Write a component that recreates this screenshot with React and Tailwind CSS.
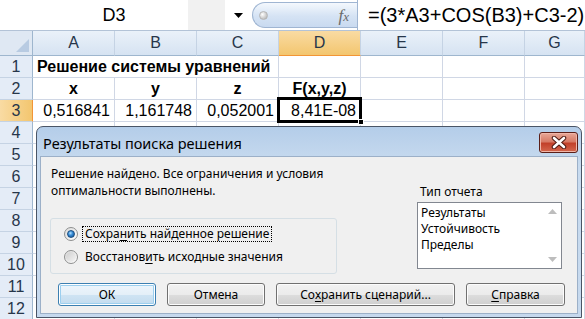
import React from "react";

const cellFont = "font-['Liberation_Sans',Arial,sans-serif]";

function HeaderCell({ label, sel, last }) {
  return (
    <div
      className={`${last ? "w-[60px]" : "w-[82px]"} shrink-0 h-full border-r border-b border-r-[#c5d3e4] border-b-[#9eb6ce] flex items-center justify-center text-[16px] text-[#27364a] ${
        sel
          ? "bg-[linear-gradient(#f9dba3,#f3c66f)] border-b-[#f29536]"
          : "bg-[linear-gradient(#eaf1f9,#d6e3f2)]"
      }`}
    >
      {label}
    </div>
  );
}

function RowHead({ n, sel }) {
  return (
    <div
      className={`w-[33px] shrink-0 h-full border-r border-b border-b-[#c5d3e4] flex items-center justify-center text-[16px] text-[#27364a] ${
        sel
          ? "bg-[linear-gradient(90deg,#f9dba3,#f3c66f)] border-r-[#f29536]"
          : "bg-[#e4ecf7] border-r-[#9eb6ce]"
      }`}
    >
      {n}
    </div>
  );
}

function Cell({ children, w = "w-[82px]", align = "justify-end", bold }) {
  return (
    <div
      className={`${w} shrink-0 h-full border-r border-b border-[#d0d7e5] flex items-center ${align} px-[4px] whitespace-nowrap text-[16px] text-black ${
        bold ? "font-bold" : ""
      }`}
    >
      {children}
    </div>
  );
}

function EmptyCells({ from }) {
  const ws = ["w-[82px]", "w-[82px]", "w-[82px]", "w-[82px]", "w-[82px]", "w-[82px]", "w-[60px]"];
  return ws.slice(from).map((w, i) => <Cell key={i} w={w} />);
}

function Btn({ children, w, def }) {
  return (
    <div
      className={`${w} h-[23px] rounded-[3px] border flex items-center justify-center text-[12px] text-black ${
        def
          ? "border-[#3c7fb1] shadow-[inset_0_0_0_1px_#fff,inset_0_0_0_2px_#9ccfef] bg-[linear-gradient(#eef6fc_0%,#e4eff8_50%,#cfe4f3_51%,#c3dbee_100%)]"
          : "border-[#707070] shadow-[inset_0_0_0_1px_#fcfcfc] bg-[linear-gradient(#f2f2f2_0%,#ebebeb_50%,#dddddd_51%,#cfcfcf_100%)]"
      }`}
    >
      {children}
    </div>
  );
}

function Radio({ checked }) {
  return (
    <div className="w-[14px] h-[14px] rounded-full border border-[#8e8f8f] bg-[linear-gradient(135deg,#dcdcdc,#ffffff)] flex items-center justify-center shrink-0">
      {checked ? (
        <div className="w-[8px] h-[8px] rounded-full bg-[radial-gradient(circle_at_40%_35%,#b6e2ff_0%,#3a8ed8_40%,#0c4a8a_100%)] border border-[#1c4e80]" />
      ) : (
        <div className="w-[10px] h-[10px] rounded-full bg-[linear-gradient(135deg,#cfcfcf,#f4f4f4)]" />
      )}
    </div>
  );
}

export default function App() {
  return (
    <div className={`relative w-[585px] h-[319px] overflow-hidden bg-white ${cellFont}`}>
      {/* Formula bar */}
      <div className="h-[31px] flex border-b border-[#b3c3d7] bg-white">
        <div className="w-[188px] shrink-0 flex items-center justify-center text-[18px] text-black pl-[40px]">
          D3
        </div>
        <div className="w-[37px] shrink-0 bg-[#f1f1f1]" />
        <div className="w-[27px] shrink-0 flex items-center justify-center">
          <svg width="9" height="5" viewBox="0 0 9 5">
            <path d="M0 0h9L4.5 5z" fill="#000" />
          </svg>
        </div>
        <div className="w-[105px] shrink-0 my-[2px] rounded-l-full border border-r-0 border-[#9fb5d2] bg-[linear-gradient(#f4f8fd,#d5e3f4_55%,#c9daf0)] flex items-center justify-between pl-[6px] pr-[8px]">
          <div className="w-[9px] h-[9px] rounded-full bg-[radial-gradient(circle_at_35%_35%,#ffffff,#a8a8a8)] border border-[#b5b5b5]" />
          <span className="font-['Liberation_Serif',serif] italic text-[17px] text-[#6b6b6b] leading-none">
            f<span className="text-[13px]">x</span>
          </span>
        </div>
        <div className="flex-1 border-l border-[#9fb5d2] flex items-center pl-[10px] text-[20px] text-black whitespace-nowrap">
          =(3*A3+COS(B3)+C3-2)
        </div>
      </div>

      {/* Column header row */}
      <div className="flex h-[25px]">
        <div className="w-[33px] shrink-0 h-full border-r border-b border-[#9eb6ce] bg-[#dfe8f3] relative">
          <svg className="absolute right-[3px] bottom-[3px]" width="13" height="13" viewBox="0 0 13 13">
            <path d="M13 0V13H0z" fill="#b8cbe2" />
          </svg>
        </div>
        <HeaderCell label="A" />
        <HeaderCell label="B" />
        <HeaderCell label="C" />
        <HeaderCell label="D" sel />
        <HeaderCell label="E" />
        <HeaderCell label="F" />
        <HeaderCell label="G" last />
      </div>

      {/* Row 1 */}
      <div className="flex h-[22px]">
        <RowHead n="1" />
        <Cell w="w-[246px]" align="justify-start" bold>
          Решение системы уравнений
        </Cell>
        <EmptyCells from={3} />
      </div>
      {/* Row 2 */}
      <div className="flex h-[22px]">
        <RowHead n="2" />
        <Cell align="justify-center" bold>x</Cell>
        <Cell align="justify-center" bold>y</Cell>
        <Cell align="justify-center" bold>z</Cell>
        <Cell align="justify-center" bold>F(x,y,z)</Cell>
        <EmptyCells from={4} />
      </div>
      {/* Row 3 */}
      <div className="flex h-[22px]">
        <RowHead n="3" sel />
        <Cell>0,516841</Cell>
        <Cell>1,161748</Cell>
        <Cell>0,052001</Cell>
        <Cell>8,41E-08</Cell>
        <EmptyCells from={4} />
      </div>
      {["4", "5", "6", "7", "8", "9", "10", "11", "12"].map((n) => (
        <div key={n} className="flex h-[22px]">
          <RowHead n={n} />
          <EmptyCells from={0} />
        </div>
      ))}

      {/* Selection of D3 */}
      <div className="absolute left-[277px] top-[97px] w-[85px] h-[26px] border-[3px] border-black" />
      <div className="absolute left-[358px] top-[119px] w-[6px] h-[6px] bg-black border border-white" />

      {/* Dialog */}
      <div className="absolute left-[36px] top-[126px] w-[546px] h-[192px] rounded-t-[7px] border border-[#4a5566] bg-[linear-gradient(#b4cde9,#c8dbef_20%,#c6d9ee)] flex flex-col font-['Noto_Sans',sans-serif]">
        {/* title bar */}
        <div className="h-[29px] flex items-start shrink-0">
          <div className="pl-[6px] pt-[6px] text-[14.5px] text-black leading-[20px]">
            Результаты поиска решения
          </div>
          <div className="ml-auto mr-[3px] mt-[5px] w-[39px] h-[21px] rounded-[3px] border border-[#5b1f18] bg-[linear-gradient(#e8a898,#d77b66_45%,#c2412a_55%,#d4674e)] shadow-[inset_0_0_0_1px_#f0b6a8] flex items-center justify-center">
            <svg width="16" height="13" viewBox="0 0 16 13">
              <path d="M3 2L13 11M13 2L3 11" stroke="#4b1810" strokeWidth="4.5" strokeLinecap="round" />
              <path d="M3 2L13 11M13 2L3 11" stroke="#ffffff" strokeWidth="2.6" strokeLinecap="round" />
            </svg>
          </div>
        </div>
        {/* body */}
        <div className="mx-[3px] mb-[3px] flex-1 bg-[#f0f0f0] border border-[#9cb0c8] pl-[9px] pt-[8px] flex flex-col">
          <div className="flex">
            <div className="w-[287px] shrink-0">
              <div className="pl-[1px] text-[12px] leading-[17px] text-black whitespace-nowrap">
                Решение найдено. Все ограничения и условия
                <br />
                оптимальности выполнены.
              </div>
              <div className="mt-[19px] w-[287px] h-[56px] rounded-[3px] border border-[#d5dfe5] pt-[3px] pl-[13px]">
                <div className="h-[23px] flex items-center">
                  <Radio checked />
                  <div className="ml-[4px] px-[2px] h-[16px] flex items-center border border-dotted border-black text-[12px] text-black whitespace-nowrap">
                    Сохра<u className="underline-offset-2">н</u>ить найденное решение
                  </div>
                </div>
                <div className="h-[23px] flex items-center">
                  <Radio />
                  <div className="ml-[7px] text-[12px] text-black whitespace-nowrap">
                    Восстанов<u className="underline-offset-2">и</u>ть исходные значения
                  </div>
                </div>
              </div>
            </div>
            <div className="ml-[80px] pt-[18px] flex flex-col">
              <div className="pl-[3px] text-[12px] leading-[17px] text-black">Тип отчета</div>
              <div className="mt-[2px] w-[145px] h-[67px] border border-[#828790] bg-white flex">
                <div className="flex-1 pl-[3px] pt-[2px] text-[12px] leading-[16px] text-black">
                  <div>Результаты</div>
                  <div>Устойчивость</div>
                  <div>Пределы</div>
                </div>
                <div className="w-[18px] flex flex-col items-center justify-between py-[6px]">
                  <svg width="9" height="5" viewBox="0 0 9 5">
                    <path d="M4.5 0L9 5H0z" fill="#bdbdbd" />
                  </svg>
                  <svg width="9" height="5" viewBox="0 0 9 5">
                    <path d="M0 0h9L4.5 5z" fill="#bdbdbd" />
                  </svg>
                </div>
              </div>
            </div>
          </div>
          <div className="mt-[9px] pl-[8px] flex gap-[11px]">
            <Btn w="w-[98px]" def>ОК</Btn>
            <Btn w="w-[98px]">Отмена</Btn>
            <Btn w="w-[179px]">
              Со<u className="underline-offset-2">х</u>ранить сценарий...
            </Btn>
            <Btn w="w-[99px]">
              <u className="underline-offset-2">С</u>правка
            </Btn>
          </div>
        </div>
      </div>
    </div>
  );
}
